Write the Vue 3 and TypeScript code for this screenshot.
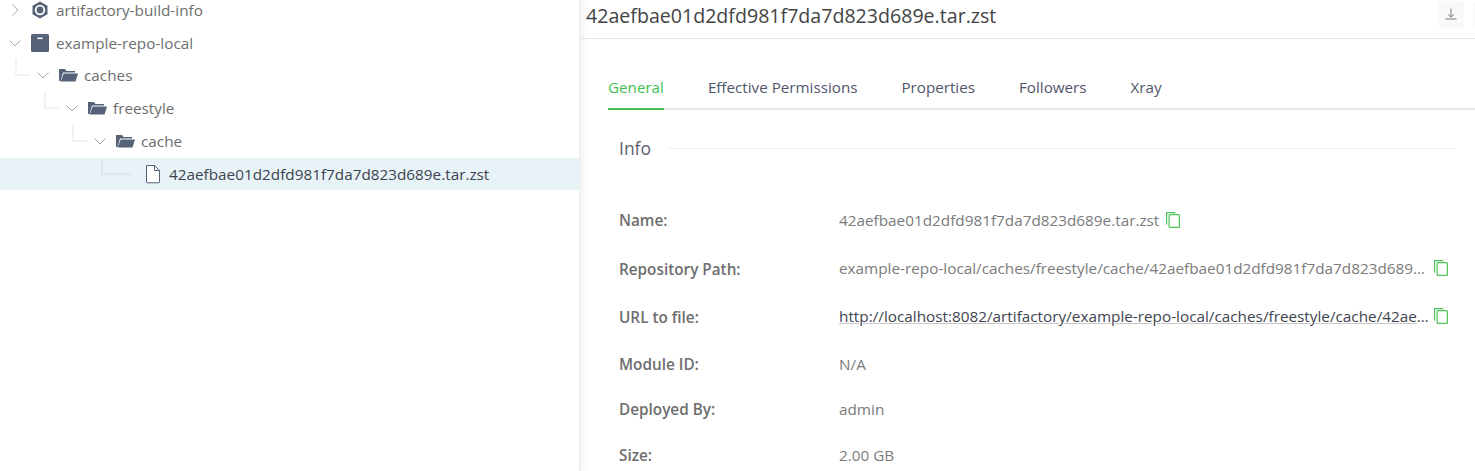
<script setup lang="ts">
interface TreeRow {
  name: string
  depth: number
  icon: 'build' | 'repo' | 'folder' | 'file'
  open?: boolean
  leaf?: boolean
  selected?: boolean
}

interface InfoRow {
  label: string
  value: string
  copy?: boolean
  link?: boolean
}

const fileName = '42aefbae01d2dfd981f7da7d823d689e.tar.zst'

const tree: TreeRow[] = [
  { name: 'artifactory-build-info', depth: 0, icon: 'build' },
  { name: 'example-repo-local', depth: 0, icon: 'repo', open: true },
  { name: 'caches', depth: 1, icon: 'folder', open: true },
  { name: 'freestyle', depth: 2, icon: 'folder', open: true },
  { name: 'cache', depth: 3, icon: 'folder', open: true },
  { name: fileName, depth: 4, icon: 'file', leaf: true, selected: true },
]

const tabs = ['General', 'Effective Permissions', 'Properties', 'Followers', 'Xray']

const info: InfoRow[] = [
  { label: 'Name:', value: fileName, copy: true },
  { label: 'Repository Path:', value: 'example-repo-local/caches/freestyle/cache/' + fileName, copy: true },
  { label: 'URL to file:', value: 'http://localhost:8082/artifactory/example-repo-local/caches/freestyle/cache/' + fileName, copy: true, link: true },
  { label: 'Module ID:', value: 'N/A' },
  { label: 'Deployed By:', value: 'admin' },
  { label: 'Size:', value: '2.00 GB' },
]
</script>

<template>
  <div class="page">
    <aside class="tree">
      <div
        v-for="row in tree"
        :key="row.name"
        class="node"
        :class="[`depth-${row.depth}`, { selected: row.selected }]"
      >
        <span class="arrow">
          <svg v-if="!row.leaf" viewBox="0 0 14 14" width="14" height="14">
            <path v-if="row.open" d="M1.5 4.5 7 10l5.5-5.5" fill="none" stroke="#a3a8ae" stroke-width="1" />
            <path v-else d="M4.5 1.5 10 7l-5.500 5.500" fill="none" stroke="#a3a8ae" stroke-width="1" />
          </svg>
        </span>
        <span class="icon">
          <svg v-if="row.icon === 'build'" viewBox="0 0 20 20" width="20" height="20">
            <path d="M10 1.500 17.500 5.800v8.400L10 18.500 2.500 14.200V5.800z" fill="#556277" />
            <circle cx="10" cy="10" r="4.300" fill="none" stroke="#fff" stroke-width="1.800" />
          </svg>
          <svg v-else-if="row.icon === 'repo'" viewBox="0 0 20 20" width="20" height="20">
            <rect x="1" y="1" width="18" height="18" rx="1.500" fill="#556277" />
            <rect x="7.500" y="4.500" width="5" height="1.600" fill="#fff" />
          </svg>
          <svg v-else-if="row.icon === 'folder'" viewBox="0 0 20 20" width="20" height="20">
            <path d="M1 16V4h6l1.500 2H17v1.500H5L2.600 16z" fill="#556277" />
            <path d="M5.700 8.500H20L17.500 16.500H2.700z" fill="#556277" />
          </svg>
          <svg v-else viewBox="0 0 20 20" width="20" height="20">
            <path d="M3.500 1.500H11.500L16.500 6.500V18a.8.8 0 0 1-.8.8H4.300a.8.8 0 0 1-.8-.8z" fill="#fff" stroke="#556277" stroke-width="1" />
            <path d="M11.500 1.500V6.500H16.500" fill="none" stroke="#556277" stroke-width="1" />
          </svg>
        </span>
        <span class="node-name">{{ row.name }}</span>
      </div>
    </aside>

    <main class="detail">
      <header class="title-bar">
        <h1>{{ fileName }}</h1>
        <div class="actions">
          <button class="action" type="button" aria-label="Download">
            <svg viewBox="0 0 12 12" width="12" height="12">
              <path d="M6 .5v8.500M3 6.200 6 9.200l3-3M.5 11h11" fill="none" stroke="#777" stroke-width="1" />
            </svg>
          </button>
          <button class="action" type="button" aria-label="More"></button>
        </div>
      </header>

      <nav class="tabs">
        <span v-for="(tab, i) in tabs" :key="tab" class="tab" :class="{ active: i === 0 }">{{ tab }}</span>
      </nav>

      <section class="info">
        <div class="legend">
          <span>Info</span>
          <i class="legend-rule"></i>
        </div>
        <dl class="info-list">
          <div v-for="row in info" :key="row.label" class="info-row">
            <dt>{{ row.label }}</dt>
            <dd>
              <span class="value" :class="{ link: row.link }">{{ row.value }}</span>
              <svg v-if="row.copy" class="copy" viewBox="0 0 14 16" width="14" height="16">
                <path d="M.6 12.500V.6H9.500" fill="none" stroke="#4fc35a" stroke-width="1.200" />
                <rect x="3.100" y="2.600" width="10.300" height="12.800" rx="1" fill="none" stroke="#4fc35a" stroke-width="1.200" />
              </svg>
            </dd>
          </div>
        </dl>
      </section>
    </main>
  </div>
</template>

<style scoped>
.page {
  display: flex;
  width: 1475px;
  height: 471px;
  overflow: hidden;
  background: #fff;
  font-family: "Open Sans", "Liberation Sans", sans-serif;
}

.tree {
  width: 579px;
  flex-shrink: 0;
  margin-top: -7px;
  border-right: 2px solid #f0f0f0;
  box-shadow: 3px 0 8px rgba(0, 0, 0, 0.05);
  z-index: 1;
}

.node {
  position: relative;
  display: flex;
  align-items: center;
  height: 33px;
  color: #6e6e6e;
  font-size: 15.3px;
}

.node:nth-child(2) { height: 30px; padding-top: 2px; }
.node:nth-child(5) { height: 34px; }

.node.selected {
  height: 32px;
  background: #e8f3f8;
  color: #3d4450;
}

.depth-0 { padding-left: 8px; }
.depth-1 { padding-left: 36px; }
.depth-2 { padding-left: 65px; }
.depth-3 { padding-left: 93px; }
.depth-4 { padding-left: 121px; }

/* tree connector */
.depth-1::before,
.depth-2::before,
.depth-3::before,
.depth-4::before {
  content: "";
  position: absolute;
  top: 1px;
  height: 15px;
  border-left: 2px solid #f1f2f4;
  border-bottom: 2px solid #f1f2f4;
}

.depth-1::before { left: 15px; width: 13px; }
.depth-2::before { left: 44px; width: 13px; }
.depth-3::before { left: 72px; width: 13px; }
.depth-4::before { top: 0; left: 101px; width: 28px; border-color: #dde8ec; }

.arrow {
  display: flex;
  width: 14px;
  height: 14px;
  margin-right: 8px;
}

.icon {
  display: flex;
  width: 20px;
  height: 20px;
  margin-right: 6px;
}

.depth-4 .arrow {
  visibility: hidden;
}

.detail {
  flex: 1;
  min-width: 0;
}

.title-bar {
  display: flex;
  align-items: center;
  justify-content: space-between;
  height: 31px;
  padding: 0 0 7px 5px;
  border-bottom: 1px solid #e9e9e9;
}

h1 {
  margin: 0;
  color: #444;
  font-size: 19.6px;
  font-weight: 400;
  line-height: 31px;
}

.actions {
  display: flex;
  gap: 9px;
  width: 37px;
  overflow: hidden;
  margin-top: -3px;
}

.action {
  display: flex;
  flex-shrink: 0;
  align-items: center;
  justify-content: center;
  width: 26px;
  height: 27px;
  padding: 0;
  border: 0;
  border-radius: 3px;
  background: #f8f9fb;
}

.tabs {
  display: flex;
  gap: 44px;
  margin: 35px 0 0 27px;
  border-bottom: 2px solid #e5e8ec;
}

.tab {
  margin-bottom: -2px;
  padding-bottom: 8px;
  border-bottom: 2px solid transparent;
  color: #50566a;
  font-size: 15.2px;
  line-height: 26px;
}

.tab.active {
  border-bottom-color: #43bf4d;
  color: #43bf4d;
}

.info {
  padding: 0 19px 0 38px;
}

.legend {
  display: flex;
  align-items: center;
  gap: 16px;
  margin-top: 26px;
  color: #5b6273;
  font-size: 17.5px;
  line-height: 24px;
}

.legend-rule {
  flex: 1;
  height: 1px;
  margin-top: 1px;
  background: #eff0f3;
}

.info-list {
  margin: 48px 0 0;
}

.info-row {
  display: flex;
  align-items: center;
  height: 24px;
  margin-bottom: 24px;
}

.info-row:nth-child(1) { margin-bottom: 25px; }
.info-row:nth-child(3) { margin-bottom: 23px; }
.info-row:nth-child(4) { margin-bottom: 21px; }
.info-row:nth-child(5) { margin-bottom: 22px; }

.info-row:nth-child(2) dd,
.info-row:nth-child(3) dd {
  margin-bottom: 2px;
}

dt {
  width: 220px;
  flex-shrink: 0;
  color: #6e6e6e;
  font-size: 15.3px;
  font-weight: 600;
}

dd {
  display: flex;
  align-items: center;
  flex: 1;
  min-width: 0;
  margin: 0;
}

.value {
  overflow: hidden;
  max-width: 588px;
  color: #7b7b7b;
  font-size: 15.3px;
  line-height: 20px;
  text-overflow: ellipsis;
  white-space: nowrap;
}

.value.link {
  max-width: 591px;
  color: #3d4450;
  text-decoration: underline;
  text-decoration-color: #c9c9c9;
}

.copy {
  flex-shrink: 0;
  margin-left: 7px;
  margin-top: -1px;
}

.link + .copy {
  margin-left: 4px;
}
</style>
